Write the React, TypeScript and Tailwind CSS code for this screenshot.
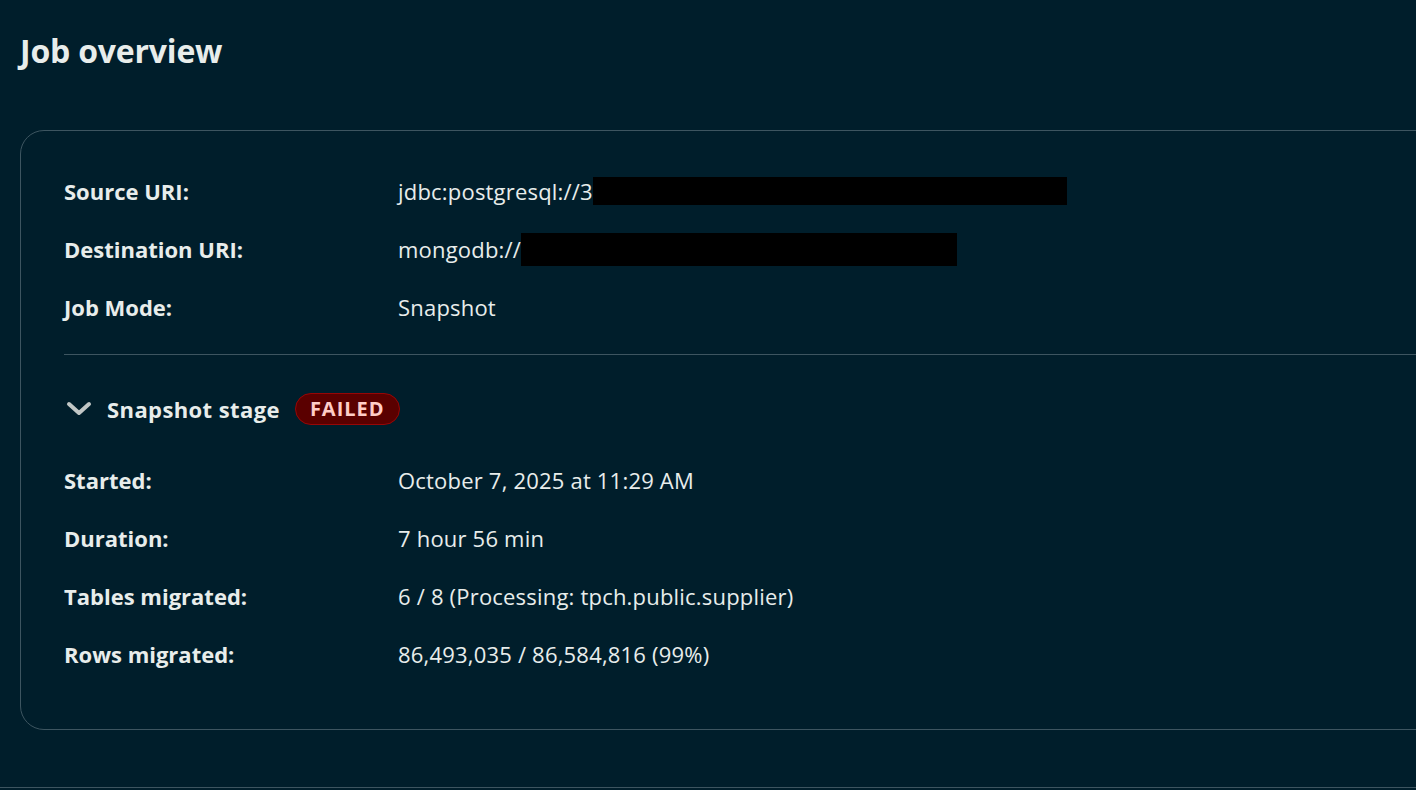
import React from "react";

const font = { fontFamily: "'Open Sans', 'Noto Sans', sans-serif" };

function Row({ label, children }: { label: string; children: React.ReactNode }) {
  return (
    <div className="flex h-[58px] items-center">
      <div className="w-[334px] shrink-0 text-[22px] font-bold text-[#e8edeb]">{label}</div>
      <div className="flex items-center text-[22px] tracking-[0.2px] text-[#e8edeb]">{children}</div>
    </div>
  );
}

export default function App() {
  return (
    <div className="relative h-[790px] w-[1416px] overflow-hidden bg-[#001e2b]" style={font}>
      <h1 className="absolute left-[20px] top-[35px] text-[32px] font-bold leading-none tracking-[-0.2px] text-[#e8edeb]">Job overview</h1>

      <div className="absolute left-[20px] top-[130px] w-[1440px] rounded-[24px] border border-[#3d5560] pt-[31px] pb-[46px] pl-[43px]">
        <Row label="Source URI:">
          <span>jdbc:postgresql://3</span>
          <span className="inline-block h-[28px] w-[474px] bg-black" />
        </Row>
        <Row label="Destination URI:">
          <span>mongodb://</span>
          <span className="inline-block h-[33px] w-[436px] bg-black" />
        </Row>
        <Row label="Job Mode:">Snapshot</Row>

        <div className="mt-[18px] border-t border-[#3d5560]" />

        <div className="mt-[25px] mb-[13px] flex h-[58px] items-center">
          <svg width="26" height="16" viewBox="0 0 26 16" className="ml-[2px]">
            <path d="M3 3 L13 12 L23 3" fill="none" stroke="#c1c7c6" strokeWidth="4" strokeLinecap="round" strokeLinejoin="round" />
          </svg>
          <span className="ml-[15px] text-[22px] font-bold tracking-[0.4px] text-[#e8edeb]">Snapshot stage</span>
          <span className="ml-[15px] flex h-[32px] items-center rounded-full border border-[#970606] bg-[#5a0000] px-[14px] text-[20px] font-bold tracking-[1px] text-[#ffcdc7]">
            FAILED
          </span>
        </div>

        <Row label="Started:">October 7, 2025 at 11:29 AM</Row>
        <Row label="Duration:">7 hour 56 min</Row>
        <Row label="Tables migrated:">6 / 8 (Processing: tpch.public.supplier)</Row>
        <Row label="Rows migrated:">86,493,035 / 86,584,816 (99%)</Row>
      </div>

      <div className="absolute bottom-[2px] left-0 right-0 border-t border-[#3d5560]" />
    </div>
  );
}
